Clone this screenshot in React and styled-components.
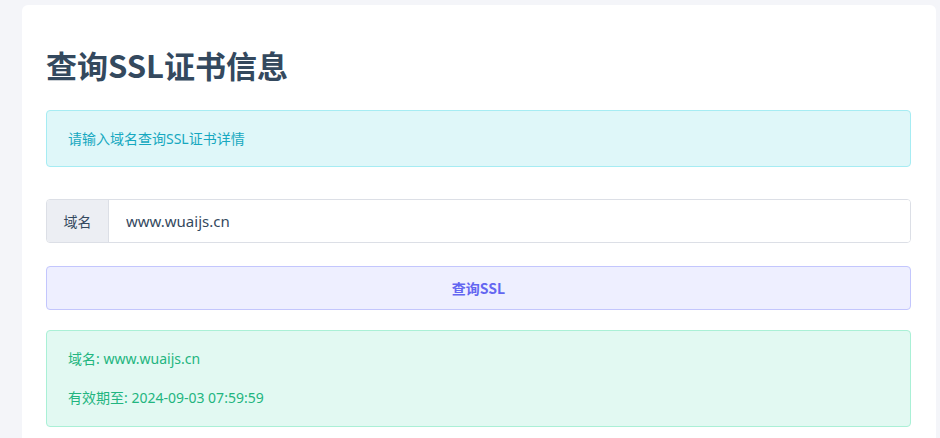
import React from "react";
import styled, { createGlobalStyle } from "styled-components";

const Global = createGlobalStyle`
  html, body { margin: 0; padding: 0; background: #f4f5f9; }
  body { font-family: "Noto Sans", "Noto Sans CJK SC", sans-serif; }
  * { box-sizing: border-box; }
`;

const Page = styled.div`
  padding: 5px 4px 0 22px;
  height: 438px;
  overflow: hidden;
`;

const Card = styled.div`
  background: #ffffff;
  border-radius: 6px 6px 0 0;
  padding: 36px 25px 40px 24px;
  min-height: 500px;
  display: flex;
  flex-direction: column;
`;

const Title = styled.h1`
  margin: 0 0 21px;
  font-family: "Noto Sans CJK SC", sans-serif;
  font-size: 31px;
  font-weight: 700;
  line-height: 48px;
  color: #34495e;
`;

const Alert = styled.div`
  border: 1px solid ${(p) => p.$border};
  background: ${(p) => p.$bg};
  color: ${(p) => p.$color};
  border-radius: 4px;
  padding: ${(p) => p.$pad || "18px 21px"};
  font-size: 14px;
  line-height: 19px;
  font-family: "Noto Sans", "Noto Sans CJK SC", sans-serif;
`;

const InputGroup = styled.div`
  margin-top: 32px;
  display: flex;
  height: 44px;
  border: 1px solid #dcdfe6;
  border-radius: 4px;
  overflow: hidden;
`;

const Addon = styled.span`
  width: 62px;
  background: #eceef3;
  border-right: 1px solid #dcdfe6;
  display: flex;
  align-items: center;
  justify-content: center;
  font-size: 14px;
  color: #34495e;
  font-family: "Noto Sans CJK SC", sans-serif;
`;

const Input = styled.input`
  flex: 1;
  border: 0;
  outline: none;
  padding: 0 17px;
  font-size: 15px;
  color: #34495e;
  font-family: "Noto Sans", "Noto Sans CJK SC", sans-serif;
  background: #fff;
`;

const Button = styled.button`
  margin-top: 23px;
  height: 44px;
  border: 1px solid #c3c6fd;
  background: #eeefff;
  border-radius: 4px;
  color: #6366f1;
  font-size: 14px;
  font-weight: 700;
  font-family: "Noto Sans CJK SC", sans-serif;
  cursor: pointer;
`;

const Result = styled(Alert)`
  margin-top: 20px;
  font-size: 14px;
  display: flex;
  flex-direction: column;
  gap: 20px;
`;

export default function App() {
  return (
    <>
      <Global />
      <Page>
        <Card>
          <Title>查询SSL证书信息</Title>
          <Alert $bg="#dff7f9" $border="#a6ecf3" $color="#16a8c0">
            请输入域名查询SSL证书详情
          </Alert>
          <InputGroup>
            <Addon>域名</Addon>
            <Input defaultValue="www.wuaijs.cn" />
          </InputGroup>
          <Button>查询SSL</Button>
          <Result $bg="#e2f9f2" $border="#aaf0d6" $color="#22b57f" $pad="18px 21px 19px">
            <span>域名: www.wuaijs.cn</span>
            <span>有效期至: 2024-09-03 07:59:59</span>
          </Result>
        </Card>
      </Page>
    </>
  );
}
